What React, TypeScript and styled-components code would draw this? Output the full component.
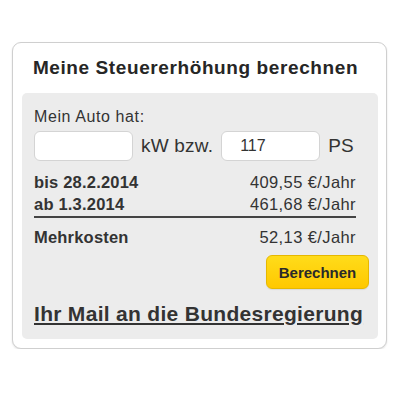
import { type FC } from 'react'
import styled, { createGlobalStyle } from 'styled-components'

const GlobalStyle = createGlobalStyle`
  body {
    margin: 0;
    background: #fff;
    font-family: 'Liberation Sans', Arial, sans-serif;
    color: #333;
  }
`

const Card = styled.section`
  box-sizing: border-box;
  width: 375px;
  height: 307px;
  margin: 42px 0 0 12px;
  border: 1px solid #cfcfcf;
  border-radius: 9px;
  box-shadow: 0 1px 2px rgba(0, 0, 0, 0.12);
  background: #fff;
  display: flex;
  flex-direction: column;
  padding: 0 8px 9px 9px;
`

const Title = styled.h2`
  margin: 0;
  height: 50px;
  padding-right: 9px;
  display: flex;
  align-items: center;
  justify-content: center;
  font-size: 19px;
  letter-spacing: 0.6px;
  font-weight: bold;
  color: #262626;
`

const Panel = styled.div`
  flex: 1;
  background: #ececec;
  border-radius: 5px;
  padding: 15px 12px 0 12px;
  display: flex;
  flex-direction: column;
`

const Label = styled.div`
  font-size: 16px;
  letter-spacing: 0.6px;
  line-height: 18px;
`

const InputRow = styled.div`
  display: flex;
  align-items: center;
  margin-top: 5px;
  gap: 8px;
  font-size: 19px;
  letter-spacing: 0.2px;
`

const Field = styled.input`
  box-sizing: border-box;
  width: 99px;
  height: 30px;
  border: 1px solid #d4d4d4;
  border-radius: 6px;
  background: #fff;
  font-family: inherit;
  font-size: 16px;
  color: #333;
  padding: 0 18px;
  outline: none;
`

const Unit = styled.span``

const Rows = styled.div`
  margin-top: 10px;
  width: 322px;
`

const Row = styled.div<{ $ruled?: boolean }>`
  display: flex;
  justify-content: space-between;
  font-size: 16.5px;
  letter-spacing: 0.4px;
  line-height: 22px;
  border-bottom: ${({ $ruled }) => ($ruled ? '2px solid #444' : 'none')};
  padding-bottom: ${({ $ruled }) => ($ruled ? '1px' : '0')};
  margin-bottom: ${({ $ruled }) => ($ruled ? '8px' : '0')};
`

const Name = styled.span`
  font-weight: bold;
  letter-spacing: 0.2px;
`

const Amount = styled.span``

const Actions = styled.div`
  display: flex;
  justify-content: flex-end;
  margin-top: 7px;
  margin-right: -3px;
`

const Button = styled.button`
  width: 103px;
  height: 34px;
  border: 1px solid #e6b800;
  border-radius: 6px;
  background: linear-gradient(#ffdc1a, #ffc800);
  box-shadow: 0 1px 1px rgba(0, 0, 0, 0.08);
  font-family: inherit;
  font-size: 15px;
  font-weight: bold;
  color: #2a2a2a;
  cursor: pointer;
`

const MailLink = styled.a`
  margin-top: 13px;
  font-size: 21px;
  letter-spacing: 0.3px;
  font-weight: bold;
  color: #333;
  text-decoration: underline;
  text-decoration-thickness: 2px;
  text-underline-offset: 2px;
`

const App: FC = () => (
  <>
    <GlobalStyle />
    <Card>
      <Title>Meine Steuererhöhung berechnen</Title>
      <Panel>
        <Label>Mein Auto hat:</Label>
        <InputRow>
          <Field />
          <Unit>kW bzw.</Unit>
          <Field defaultValue="117" />
          <Unit>PS</Unit>
        </InputRow>
        <Rows>
          <Row>
            <Name>bis 28.2.2014</Name>
            <Amount>409,55 €/Jahr</Amount>
          </Row>
          <Row $ruled>
            <Name>ab 1.3.2014</Name>
            <Amount>461,68 €/Jahr</Amount>
          </Row>
          <Row>
            <Name>Mehrkosten</Name>
            <Amount>52,13 €/Jahr</Amount>
          </Row>
        </Rows>
        <Actions>
          <Button>Berechnen</Button>
        </Actions>
        <MailLink href="#">Ihr Mail an die Bundesregierung</MailLink>
      </Panel>
    </Card>
  </>
)

export default App
